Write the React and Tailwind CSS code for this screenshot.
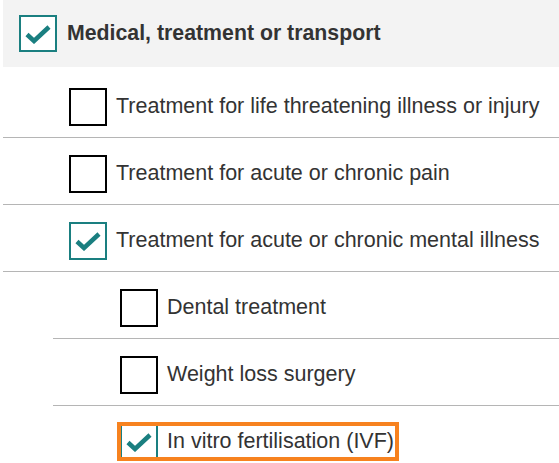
const TEAL = '#1a7f80';

function Check() {
  return (
    <svg width="26" height="20" viewBox="0 0 26 20" className="block">
      <path d="M2 10.5 L9 17 L24 3" fill="none" stroke={TEAL} strokeWidth="4.5" strokeLinejoin="miter" />
    </svg>
  );
}

function Box({ checked }) {
  return (
    <div
      className={
        'w-[38px] h-[38px] shrink-0 flex items-center justify-center bg-white ' +
        (checked ? 'border-2 border-[#1a7f80]' : 'border-2 border-black')
      }
    >
      {checked && <Check />}
    </div>
  );
}

function Row({ label, checked, indent, focus, last }) {
  return (
    <div className={'relative flex items-center gap-[10px] pt-[17px] pb-[11px] ' + (last ? '' : 'border-b border-[#b5b5b5]')}>
      <div className={indent}></div>
      <Box checked={checked} />
      <span className="-ml-px text-[21.5px] leading-none text-[#333] whitespace-nowrap">{label}</span>
      {focus && (
        <div className="absolute left-[64px] top-[16px] w-[282px] h-[39px] border-[4px] border-[#f7821f]"></div>
      )}
    </div>
  );
}

export default function App() {
  return (
    <div
      className="w-[559px] h-[463px] overflow-hidden bg-white"
      style={{ fontFamily: '"Liberation Sans", Arial, sans-serif' }}
    >
      <div className="ml-[3px] h-[67px] bg-[#f3f3f3] flex items-center gap-[10px] pl-[16px]">
        <div className="w-[38px] h-[37px] shrink-0 flex items-center justify-center bg-white border-2 border-[#1a7f80]">
          <Check />
        </div>
        <span className="text-[21.3px] font-bold text-[#333] whitespace-nowrap">Medical, treatment or transport</span>
      </div>

      <div className="ml-[3px] mt-[4px]">
        <Row label="Treatment for life threatening illness or injury" indent="w-[56px]" />
        <Row label="Treatment for acute or chronic pain" indent="w-[56px]" />
        <Row label="Treatment for acute or chronic mental illness" checked indent="w-[56px]" />
        <div className="ml-[50px]">
          <Row label="Dental treatment" indent="w-[57px]" />
          <Row label="Weight loss surgery" indent="w-[57px]" />
          <Row label="In vitro fertilisation (IVF)" checked indent="w-[57px]" focus last />
        </div>
      </div>
    </div>
  );
}
